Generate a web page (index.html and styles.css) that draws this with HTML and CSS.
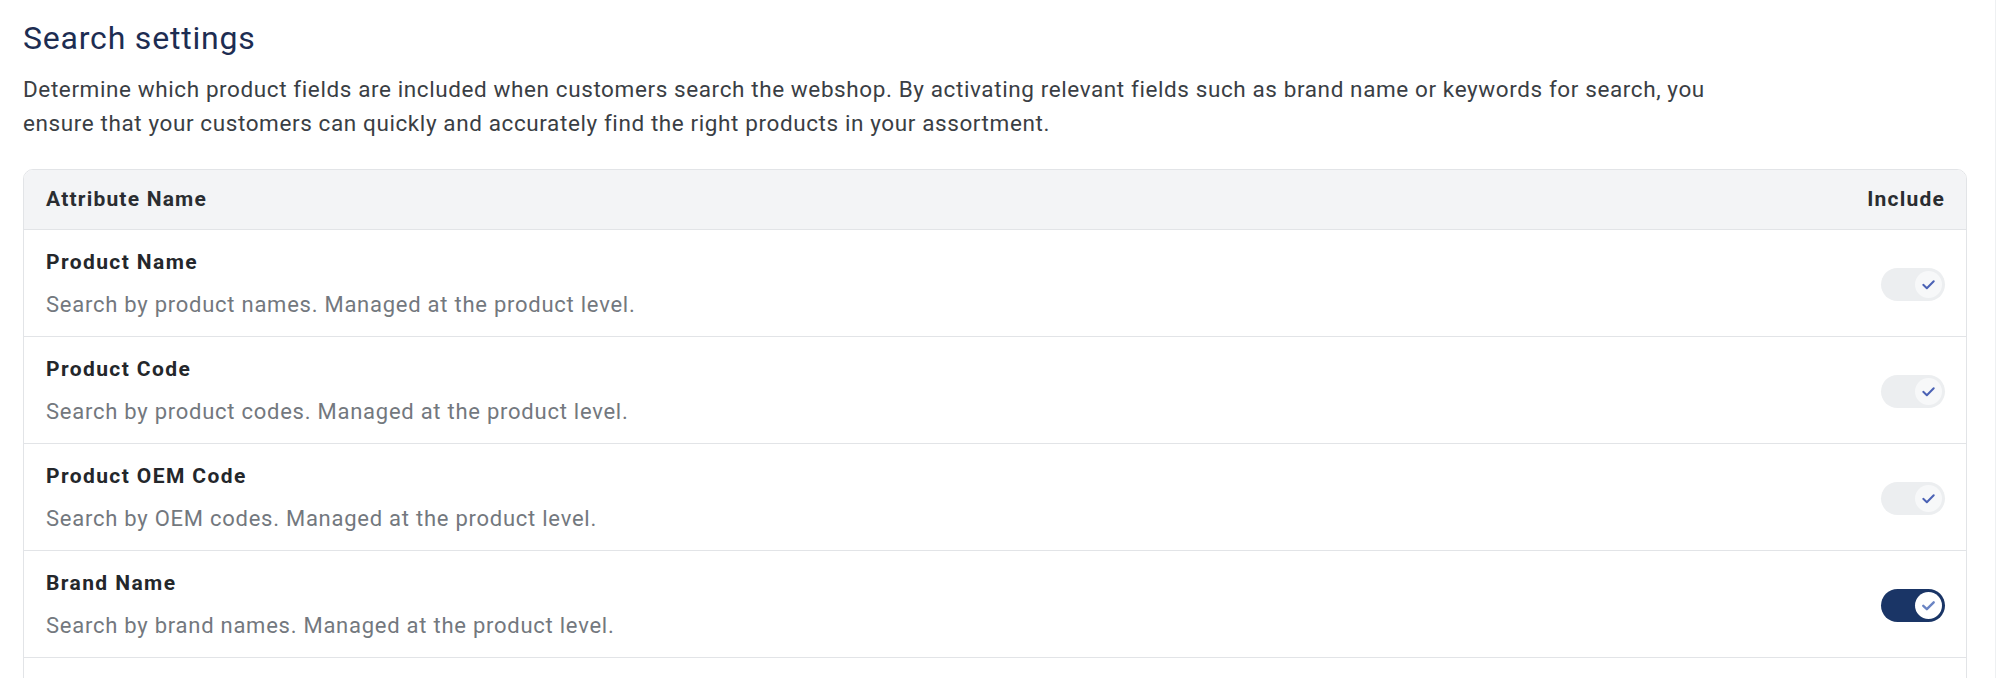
FILE: index.html
```html
<!DOCTYPE html>
<html lang="en">
<head>
    <meta charset="UTF-8">
    <meta name="viewport" content="width=device-width, initial-scale=1.0">
    <title>Search settings</title>
    <link rel="stylesheet" href="styles.css">
</head>
<body>
    <div class="page">
        <h1>Search settings</h1>
        <p class="intro">Determine which product fields are included when customers search the webshop. By activating relevant fields such as brand name or keywords for search, you ensure that your customers can quickly and accurately find the right products in your assortment.</p>

        <div class="table">
            <div class="table-head">
                <span>Attribute Name</span>
                <span>Include</span>
            </div>
            <div class="row">
                <div class="row-text">
                    <div class="row-title">Product Name</div>
                    <div class="row-desc">Search by product names. Managed at the product level.</div>
                </div>
                <span class="toggle locked">
                    <span class="knob"><svg viewBox="0 0 16 16"><path d="M3.6 8.3l3 2.8 5.8-5.8"/></svg></span>
                </span>
            </div>
            <div class="row">
                <div class="row-text">
                    <div class="row-title">Product Code</div>
                    <div class="row-desc">Search by product codes. Managed at the product level.</div>
                </div>
                <span class="toggle locked">
                    <span class="knob"><svg viewBox="0 0 16 16"><path d="M3.6 8.3l3 2.8 5.8-5.8"/></svg></span>
                </span>
            </div>
            <div class="row">
                <div class="row-text">
                    <div class="row-title">Product OEM Code</div>
                    <div class="row-desc">Search by OEM codes. Managed at the product level.</div>
                </div>
                <span class="toggle locked">
                    <span class="knob"><svg viewBox="0 0 16 16"><path d="M3.6 8.3l3 2.8 5.8-5.8"/></svg></span>
                </span>
            </div>
            <div class="row">
                <div class="row-text">
                    <div class="row-title">Brand Name</div>
                    <div class="row-desc">Search by brand names. Managed at the product level.</div>
                </div>
                <span class="toggle on">
                    <span class="knob"><svg viewBox="0 0 16 16"><path d="M3.6 8.3l3 2.8 5.8-5.8"/></svg></span>
                </span>
            </div>
            <div class="row row-more"></div>
        </div>
    </div>
</body>
</html>
```

FILE: styles.css
```css
body {
    margin: 0;
    padding: 0;
    background-color: #ffffff;
    font-family: Roboto, "Liberation Sans", Arial, sans-serif;
    overflow: hidden;
}
.page {
    width: 1944px;
    padding: 18px 28px 0 23px;
    border-right: 1px solid #eef0f2;
    min-height: 100vh;
}
h1 {
    margin: 0;
    font-size: 32px;
    line-height: 40px;
    font-weight: 400;
    letter-spacing: 0.8px;
    color: #1d2d52;
}
.intro {
    margin: 14px 0 29px;
    max-width: 1720px;
    font-size: 22.5px;
    line-height: 34px;
    letter-spacing: 0.6px;
    color: #3a3e44;
}
.table {
    border: 1px solid #e2e4e7;
    border-radius: 10px;
    overflow: hidden;
}
.table-head {
    display: flex;
    justify-content: space-between;
    padding: 15px 21px 16px 22px;
    background-color: #f3f4f6;
    border-bottom: 1px solid #e2e4e7;
    font-size: 21px;
    line-height: 28px;
    font-weight: 700;
    letter-spacing: 1.2px;
    color: #2a2d31;
}
.row {
    display: flex;
    align-items: center;
    justify-content: space-between;
    padding: 18px 21px 16px 22px;
    border-bottom: 1px solid #e2e4e7;
}
.row-more {
    height: 40px;
    border-bottom: none;
}
.row-title {
    font-size: 21px;
    line-height: 28px;
    font-weight: 700;
    letter-spacing: 1.4px;
    color: #24272b;
    margin-bottom: 14px;
}
.row-desc {
    font-size: 22px;
    line-height: 30px;
    letter-spacing: 0.75px;
    color: #73787e;
}
.toggle {
    display: flex;
    align-items: center;
    justify-content: flex-end;
    width: 64px;
    height: 33px;
    padding: 0 3px;
    box-sizing: border-box;
    border-radius: 17px;
    background-color: #eceef0;
}
.knob {
    display: flex;
    align-items: center;
    justify-content: center;
    width: 27px;
    height: 27px;
    border-radius: 50%;
    background-color: #f7f8f9;
}
.knob svg {
    width: 19px;
    height: 19px;
    fill: none;
    stroke: #4b62b5;
    stroke-width: 1.7;
    stroke-linecap: round;
    stroke-linejoin: round;
}
.toggle.on {
    background-color: #1a3566;
}
.toggle.on .knob {
    background-color: #ffffff;
}
.toggle.on .knob svg {
    stroke: #6a84c4;
    stroke-width: 2;
}
```
